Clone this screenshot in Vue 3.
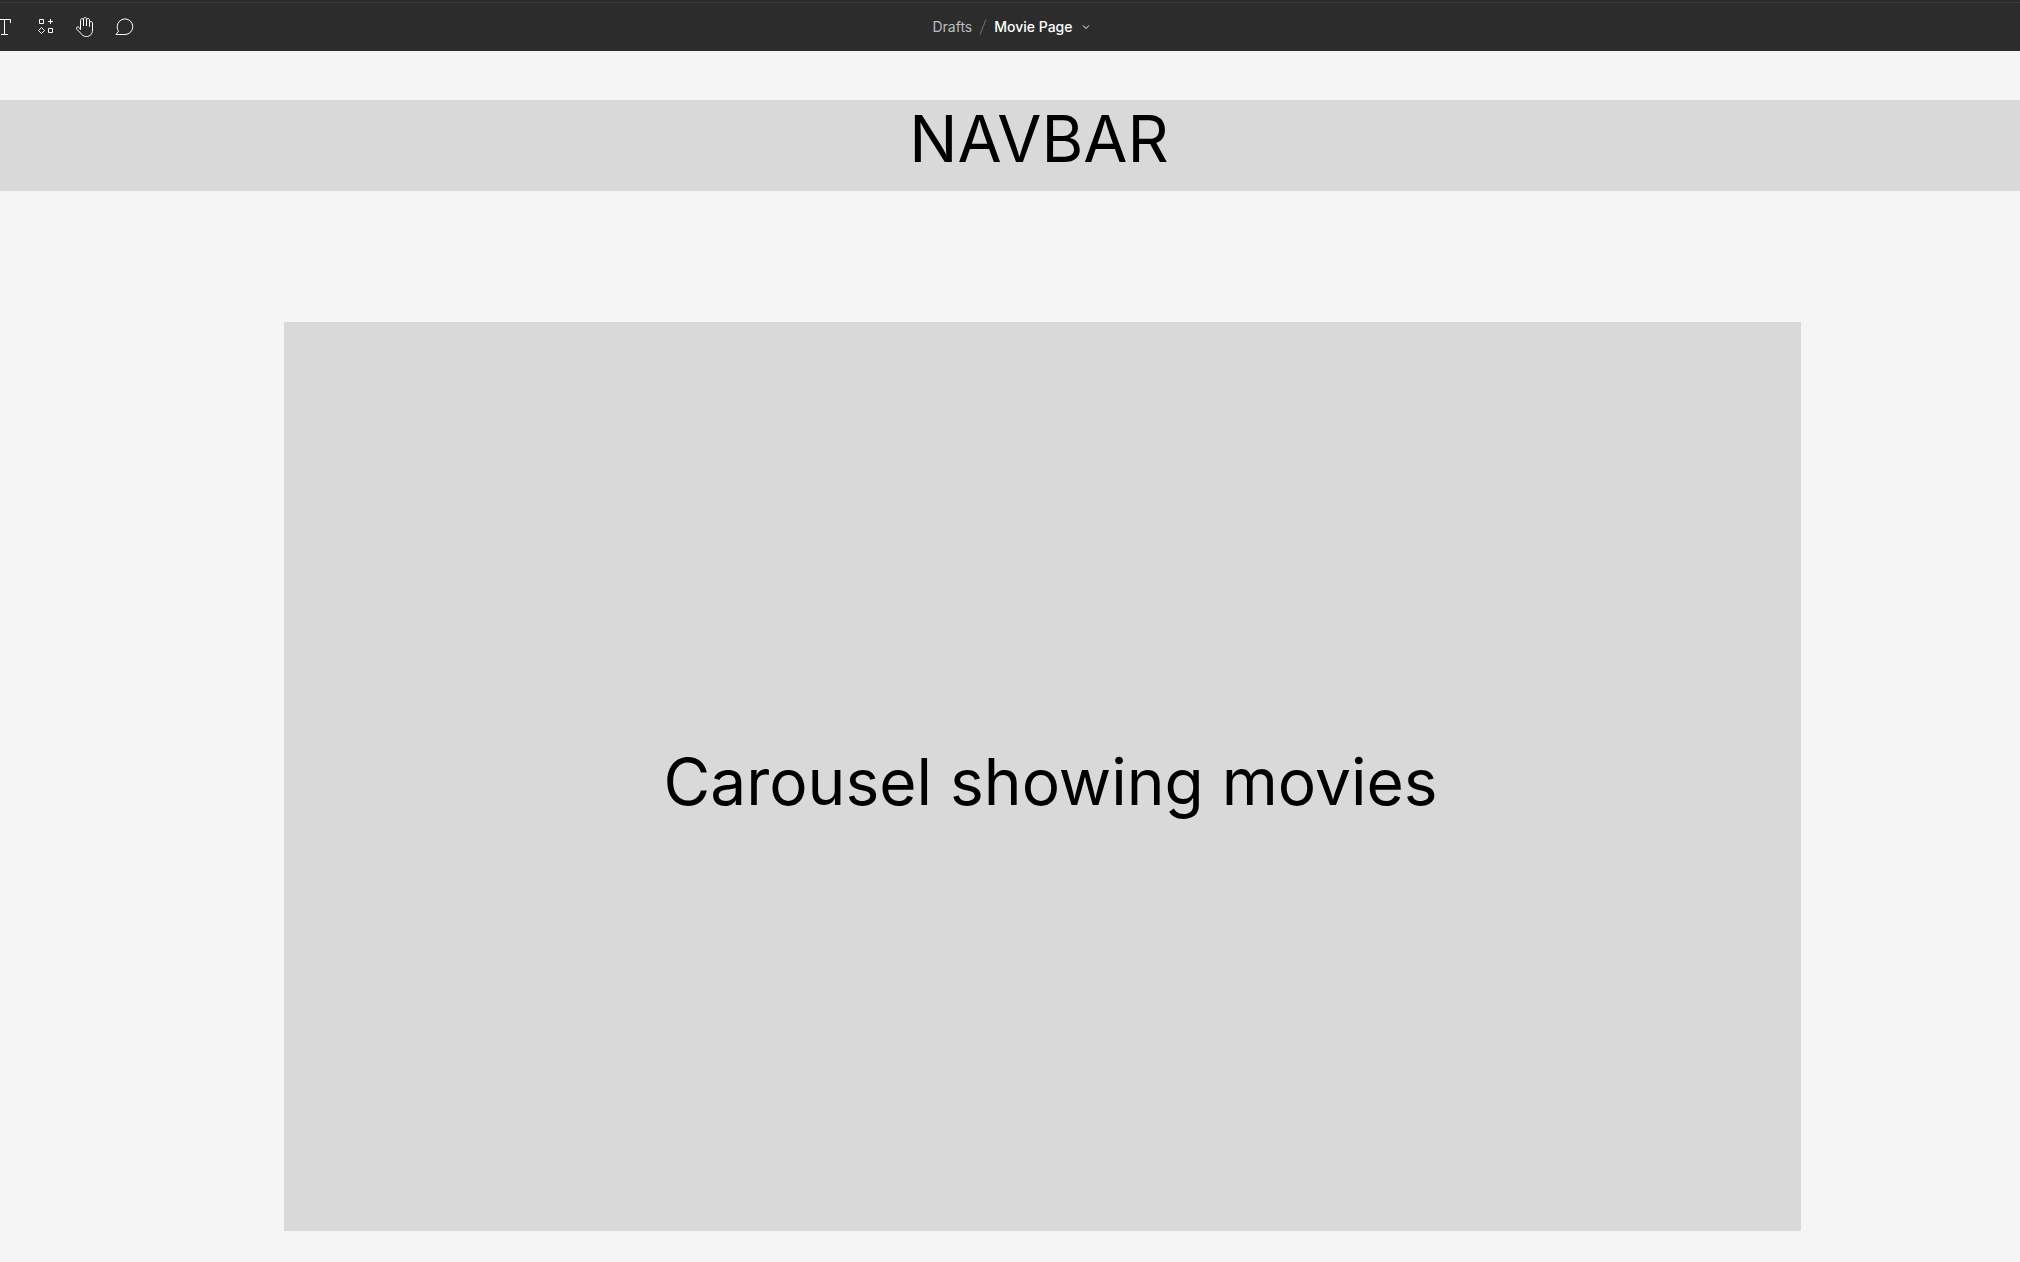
<script setup>
const tools = [
  {
    name: 'Text',
    paths: ['M5.5 8V4.5h12V8', 'M11.5 4.5v15', 'M8 19.5h7'],
  },
  {
    name: 'Resources',
    paths: [
      'M6.5 4.5h4v4h-4z',
      'M17.5 4v5M15 6.5h5',
      'M8.5 12.5l3 3-3 3-3-3z',
      'M15.5 13.5h4v4h-4z',
    ],
  },
  {
    name: 'Hand tool',
    paths: [
      'M7.5 14.5V5.5c0-2.5 3-2.5 3 0V11V4c0-2 3-2 3 0v7V5c0-2 3-2 3 0v6.500V8c0-2 3-2 3 0v7c0 4-2.500 6.500-6 6.500c-3 0-4.500-1.500-6-3.500L4 14.500c-1.500-2 .5-3.500 2-2l1.500 2',
    ],
  },
  {
    name: 'Comment',
    paths: ['M3 19.500h9a7.800 7.800 0 1 0-7.800-7.800c0 2 .5 3.300 1.300 4.500z'],
  },
]
</script>

<template>
  <div class="editor">
    <header class="toolbar">
      <div class="tools">
        <button v-for="tool in tools" :key="tool.name" type="button" class="tool" :aria-label="tool.name">
          <svg viewBox="0 0 24 24" width="24" height="24" aria-hidden="true">
            <path v-for="d in tool.paths" :key="d" :d="d" />
          </svg>
        </button>
      </div>
      <nav class="crumbs" aria-label="File">
        <a href="#" class="folder">Drafts</a>
        <svg class="slash" viewBox="0 0 8 16" width="8" height="16" aria-hidden="true"><path d="M1 15.500L7 .5" /></svg>
        <button type="button" class="file">
          Movie Page
          <svg viewBox="0 0 8 6" width="8" height="6" aria-hidden="true"><path d="M1 1.500l3 3 3-3" /></svg>
        </button>
      </nav>
    </header>
    <main class="canvas">
      <section class="navbar"><h1 class="label">NAVBAR</h1></section>
      <section class="carousel"><p class="label">Carousel showing movies</p></section>
    </main>
  </div>
</template>

<style>
body {
  background: #f5f5f5;
}
</style>

<style scoped>
.editor {
  font-family: Inter, "Liberation Sans", sans-serif;
  min-height: 100vh;
  display: flex;
  flex-direction: column;
  overflow: hidden;
}

.toolbar {
  display: grid;
  grid-template-columns: 1fr auto 1fr;
  align-items: center;
  height: 48px;
  border-top: 1px solid #3c3c3c;
  background: #2c2c2c;
  box-shadow: 0 -2px #2c2c2c;
  margin-top: 2px;
}

.tools {
  display: flex;
  margin-left: -15px;
}

.tool {
  display: flex;
  align-items: center;
  justify-content: center;
  width: 40px;
  height: 48px;
  padding: 0;
  border: 0;
  background: none;
}

svg {
  fill: none;
  stroke: #fff;
  stroke-width: 1;
}

.crumbs {
  display: flex;
  align-items: center;
  gap: 7px;
  padding-left: 2px;
  font-size: 14px;
  line-height: 20px;
}

.folder {
  color: #bdbdbd;
  text-decoration: none;
}

.slash {
  stroke: #757575;
}

.file {
  display: flex;
  align-items: center;
  gap: 9px;
  padding: 0;
  border: 0;
  background: none;
  color: #fff;
  font: inherit;
  font-weight: 500;
}

.canvas {
  flex: 1;
  padding: 49px 0 31px;
}

.navbar {
  box-sizing: border-box;
  height: 91px;
  padding-left: 58px;
  background: #d9d9d9;
}

.carousel {
  display: flex;
  align-items: center;
  justify-content: center;
  box-sizing: border-box;
  min-height: 909px;
  margin: 131px 219px 0 284px;
  padding: 10px 0 0 16px;
  background: #d9d9d9;
}

.label {
  margin: 0;
  color: #000;
  font-size: 64px;
  font-weight: 400;
  line-height: 78px;
  text-align: center;
}
</style>
